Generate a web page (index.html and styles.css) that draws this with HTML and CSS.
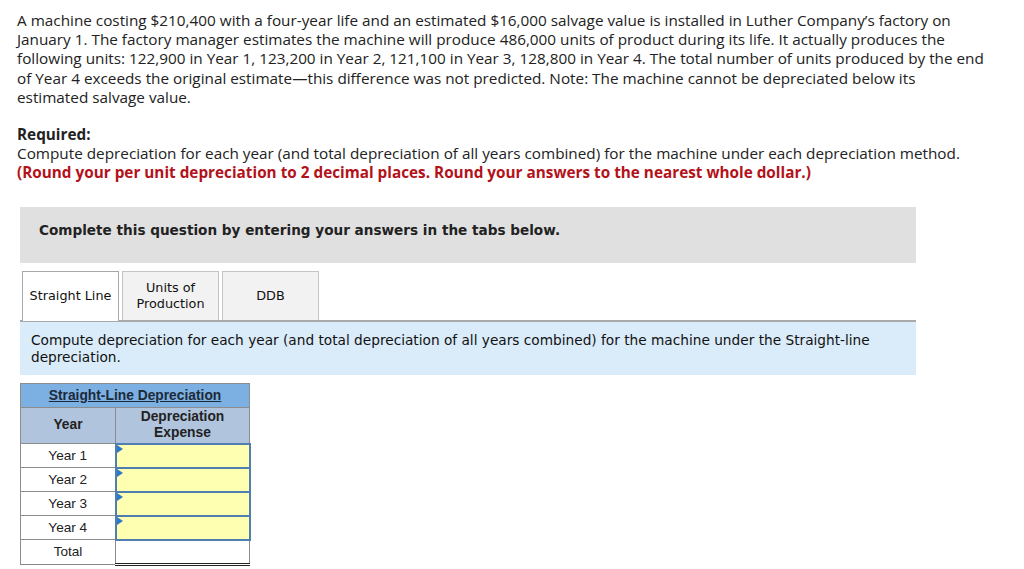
FILE: index.html
```html
<!DOCTYPE html>
<html lang="en">
<head>
    <meta charset="UTF-8">
    <title>Depreciation</title>
    <link rel="stylesheet" href="styles.css">
</head>
<body>

    <div class="question">
        <p class="intro">A machine costing $210,400 with a four-year life and an estimated $16,000 salvage value is installed in Luther Company’s factory on January 1. The factory manager estimates the machine will produce 486,000 units of product during its life. It actually produces the following units: 122,900 in Year 1, 123,200 in Year 2, 121,100 in Year 3, 128,800 in Year 4. The total number of units produced by the end of Year 4 exceeds the original estimate—this difference was not predicted. Note: The machine cannot be depreciated below its estimated salvage value.</p>

        <div class="required">
            <strong>Required:</strong><br>
            Compute depreciation for each year (and total depreciation of all years combined) for the machine under each depreciation method.<br>
            <span class="note">(Round your per unit depreciation to 2 decimal places. Round your answers to the nearest whole dollar.)</span>
        </div>
    </div>

    <div class="work-area">
        <div class="banner">Complete this question by entering your answers in the tabs below.</div>

        <div class="tabs">
            <div class="tab active">Straight Line</div>
            <div class="tab">Units of<br>Production</div>
            <div class="tab">DDB</div>
        </div>

        <div class="instructions">
            Compute depreciation for each year (and total depreciation of all years combined) for the machine under the Straight-line depreciation.
        </div>

        <table class="dep-table">
            <tr>
                <th colspan="2" class="title"><u>Straight-Line Depreciation</u></th>
            </tr>
            <tr>
                <th class="col-year">Year</th>
                <th class="col-exp">Depreciation<br>Expense</th>
            </tr>
            <tr>
                <td>Year 1</td>
                <td class="entry"><span class="marker"></span></td>
            </tr>
            <tr>
                <td>Year 2</td>
                <td class="entry"><span class="marker"></span></td>
            </tr>
            <tr>
                <td>Year 3</td>
                <td class="entry"><span class="marker"></span></td>
            </tr>
            <tr>
                <td>Year 4</td>
                <td class="entry"><span class="marker"></span></td>
            </tr>
            <tr class="total-row">
                <td>Total</td>
                <td class="total"></td>
            </tr>
        </table>
    </div>

</body>
</html>
```

FILE: styles.css
```css
body {
    margin: 0;
    padding: 0;
    background: #fff;
    color: #222;
}

/* --- Question text --- */
.question {
    font-family: "Open Sans", Lato, sans-serif;
    font-size: 15.3px;
    line-height: 19.2px;
    padding: 11px 20px 0 17px;
    width: 1010px;
    box-sizing: border-box;
}

.intro {
    margin: 0;
}

.required {
    margin-top: 18px;
}

.required strong {
    font-weight: 700;
}

.note {
    color: #b3121a;
    font-weight: 700;
}

/* --- Work area --- */
.work-area {
    margin: 24px 0 0 20px;
    width: 896px;
}

.banner {
    background-color: #e0e0e0;
    font-family: "DejaVu Sans", Verdana, sans-serif;
    font-weight: bold;
    font-size: 13.6px;
    height: 56px;
    padding: 15px 19px 0;
    box-sizing: border-box;
}

.tabs {
    display: flex;
    gap: 3px;
    margin: 8px 0 0 2px;
    height: 49px;
    align-items: flex-end;
}

.tab {
    width: 97px;
    height: 49px;
    box-sizing: border-box;
    border: 1px solid #c4c4c4;
    border-bottom: none;
    background-color: #f2f2f2;
    font-family: "DejaVu Sans", Verdana, sans-serif;
    font-size: 12.8px;
    line-height: 16px;
    color: #111;
    display: flex;
    align-items: center;
    justify-content: center;
    text-align: center;
}

.tab.active {
    background-color: #fff;
    border-color: #a8a8a8;
    height: 50px;
    margin-bottom: -1px;
    position: relative;
}

.instructions {
    border-top: 2px solid #a9a9a9;
    background-color: #daebf9;
    font-family: "DejaVu Sans", Verdana, sans-serif;
    font-size: 13.7px;
    line-height: 17px;
    color: #111;
    padding: 10px 40px 10px 11px;
    height: 55px;
    box-sizing: border-box;
}

/* --- Table --- */
.dep-table {
    margin-top: 8px;
    border-collapse: collapse;
    font-family: "Liberation Sans", Arial, sans-serif;
    font-size: 13.6px;
    color: #222;
    border: 1px solid #888;
}

.dep-table th,
.dep-table td {
    border: 1px solid #8c8c8c;
    text-align: center;
    padding: 0;
}

.dep-table th.title {
    background-color: #7cb0e2;
    height: 23px;
    font-size: 13.8px;
    color: #1d2a3a;
}

.dep-table th.col-year,
.dep-table th.col-exp {
    background-color: #b0c4de;
    height: 35px;
    line-height: 16px;
    font-size: 13.8px;
}

.col-year {
    width: 94px;
}

.col-exp {
    width: 133px;
}

.dep-table td {
    height: 22px;
    background-color: #fff;
}

.dep-table td.entry {
    background-color: #ffffb1;
    border: 2px solid #4f7fb0;
    position: relative;
}

.marker {
    position: absolute;
    top: 0;
    left: 0;
    width: 0;
    height: 0;
    border-top: 4px solid transparent;
    border-bottom: 4px solid transparent;
    border-left: 6px solid #2e78c8;
}

.total-row td {
    border-bottom: 3px double #222;
}

.total-row td:first-child {
    border-bottom: 1px solid #888;
}
```
